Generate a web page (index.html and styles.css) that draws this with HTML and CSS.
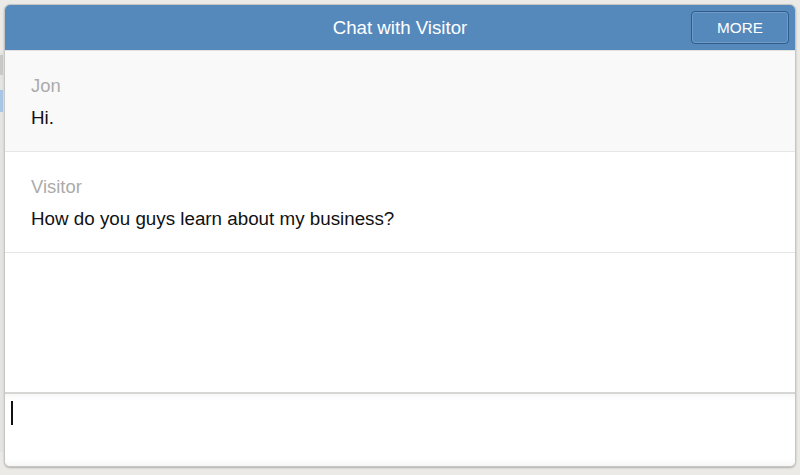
FILE: index.html
```html
<!DOCTYPE html>
<html>
<head>
<meta charset="utf-8">
<link rel="stylesheet" href="styles.css">
</head>
<body>
<div class="page">
  <div class="edge"><div class="edge-dark"></div><div class="edge-mark"></div></div>
  <div class="window">
    <div class="header">
      <div class="title">Chat with Visitor</div>
      <button class="more">MORE</button>
    </div>
    <div class="messages">
      <div class="msg msg-alt">
        <div class="name">Jon</div>
        <div class="text">Hi.</div>
      </div>
      <div class="msg">
        <div class="name">Visitor</div>
        <div class="text">How do you guys learn about my business?</div>
      </div>
    </div>
    <div class="input">
      <div class="caret"></div>
    </div>
  </div>
</div>
</body>
</html>
```
FILE: styles.css
```css
html, body {
  margin: 0;
  padding: 0;
  width: 800px;
  height: 475px;
  overflow: hidden;
  background: #ebeae7;
  font-family: "Liberation Sans", Arial, Helvetica, sans-serif;
}
.page {
  position: relative;
  width: 800px;
  height: 475px;
  padding: 4px 0 0 4px;
  box-sizing: border-box;
}
.edge {
  position: absolute;
  left: 0;
  top: 52px;
  width: 3px;
  height: 400px;
  background: #e4e4e2;
}
.edge-dark {
  margin-top: 3px;
  height: 20px;
  background: #c9c9c7;
}
.edge-mark {
  margin-top: 15px;
  height: 22px;
  background: #a9c6e6;
}
.window {
  position: relative;
  width: 792px;
  height: 463px;
  box-sizing: border-box;
  border: 1px solid #c6c6c4;
  border-radius: 6px;
  background: #ffffff;
  overflow: hidden;
  display: flex;
  flex-direction: column;
  box-shadow: 0 1px 2px rgba(0,0,0,0.25);
}
.header {
  flex: 0 0 45px;
  background: #5589bc;
  display: flex;
  align-items: center;
  justify-content: center;
  position: relative;
  border-bottom: 1px solid #e2e2e0;
}
.title {
  color: #ffffff;
  font-size: 18.7px;
}
.more {
  position: absolute;
  right: 6px;
  top: 6px;
  width: 98px;
  height: 33px;
  box-sizing: border-box;
  background: #5589bc;
  border: 1px solid #2f5c8c;
  border-radius: 4px;
  box-shadow: inset 0 0 0 1px #6f9bc8;
  color: #ffffff;
  font-family: "Liberation Sans", Arial, Helvetica, sans-serif;
  font-size: 15.3px;
  padding: 0;
}
.messages {
  flex: 1 1 auto;
  border-bottom: 2px solid #d6d6d4;
}
.msg {
  padding: 23px 26px 21px;
  border-bottom: 1px solid #e6e6e6;
  background: #ffffff;
}
.msg-alt {
  background: #f9f9f9;
}
.name {
  color: #ababab;
  font-size: 18.4px;
  line-height: 24px;
  margin-bottom: 8px;
}
.text {
  color: #111111;
  font-size: 18.8px;
  line-height: 24px;
}
.input {
  flex: 0 0 72px;
  background: linear-gradient(#f7f7f7, #ffffff 6px, #ffffff 90%, #f6f6f6);
  padding: 7px 0 0 6px;
  box-sizing: border-box;
}
.caret {
  width: 2px;
  height: 24px;
  background: #111111;
}
```
